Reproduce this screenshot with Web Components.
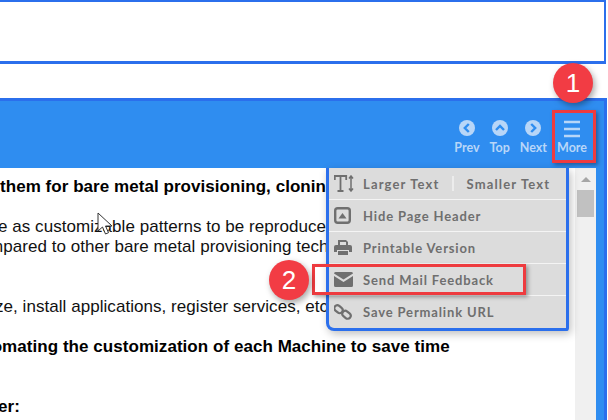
<!DOCTYPE html>
<html>
<head>
<meta charset="utf-8">
<style>
  html, body { margin: 0; padding: 0; background: #fff; overflow: hidden; }
  body { width: 608px; height: 420px; position: relative; font-family: "Liberation Sans", sans-serif; }
</style>
</head>
<body>
<top-box></top-box>
<doc-panel>
  <tool-button slot="tools" label="Prev"><svg viewBox="0 0 16 16" width="16" height="16"><circle cx="8" cy="8" r="8" fill="#b8d6f8"/><path d="M9.800 4 5.800 8l4 4" fill="none" stroke="#2f8df0" stroke-width="2.400"/></svg></tool-button>
  <tool-button slot="tools" label="Top"><svg viewBox="0 0 16 16" width="16" height="16"><circle cx="8" cy="8" r="8" fill="#b8d6f8"/><path d="M4 10 8 6l4 4" fill="none" stroke="#2f8df0" stroke-width="2.400"/></svg></tool-button>
  <tool-button slot="tools" label="Next"><svg viewBox="0 0 16 16" width="16" height="16"><circle cx="8" cy="8" r="8" fill="#b8d6f8"/><path d="M6.200 4l4 4-4 4" fill="none" stroke="#2f8df0" stroke-width="2.400"/></svg></tool-button>
  <tool-button slot="tools" label="More"><svg viewBox="0 0 16 16" width="16" height="16"><path d="M0 2h16M0 9h16M0 16h16" stroke="#b8d6f8" stroke-width="2.600"/></svg></tool-button>

  <doc-line bold style="margin-top:9px">them for bare metal provisioning, clonin</doc-line>
  <doc-line style="margin-top:20px;margin-left:-2px">e as customizable patterns to be reproduce</doc-line>
  <doc-line style="margin-left:-11px">mpared to other bare metal provisioning tech</doc-line>
  <doc-line style="margin-top:40px;margin-left:-5px">ze, install applications, register services, etc</doc-line>
  <doc-line bold style="margin-top:20px;margin-left:-34px">automating the customization of each Machine to save time</doc-line>
  <doc-line bold style="margin-top:40px;margin-left:-2px">er:</doc-line>
</doc-panel>

<doc-menu>
  <menu-row wide>
    <svg slot="icon" viewBox="0 0 21 17" width="21" height="17"><path d="M.8 5V1h11.400v4M6.500 1v15M3.500 16h6" fill="none" stroke="#6f6f6f" stroke-width="1.800"/><path d="M17 1v15M15 3.500 17 1l2 2.500M15 13.500l2 2.500 2-2.500" fill="none" stroke="#6f6f6f" stroke-width="1.500"/></svg>
    Larger Text<i slot="sep"></i><span slot="extra">Smaller Text</span>
  </menu-row>
  <menu-row>
    <svg slot="icon" viewBox="0 0 17 17" width="17" height="17"><rect x="1.200" y="1.200" width="14.600" height="14.600" rx="2.500" fill="none" stroke="#6f6f6f" stroke-width="2.400"/><path d="M4.500 11.500 8.500 6l4 5.500z" fill="#6f6f6f"/></svg>
    Hide Page Header
  </menu-row>
  <menu-row>
    <svg slot="icon" viewBox="0 0 18 17" width="18" height="17"><path d="M4 6V1h8l2 2v3h-2V3H6v3z" fill="#6f6f6f"/><path d="M2 6h14a2 2 0 0 1 2 2v5h-3v-2H3v2H0V8a2 2 0 0 1 2-2z" fill="#6f6f6f"/><path d="M4 12h10v4H4z" fill="#6f6f6f"/></svg>
    Printable Version
  </menu-row>
  <menu-row>
    <svg slot="icon" viewBox="0 0 19 15" width="19" height="15"><path d="M1.500 0h16A1.500 1.500 0 0 1 19 1.500L9.500 7.500 0 1.500A1.500 1.500 0 0 1 1.500 0z" fill="#6f6f6f"/><path d="M0 4l9.500 6L19 4v9.500a1.500 1.500 0 0 1-1.500 1.500h-16A1.500 1.500 0 0 1 0 13.500z" fill="#6f6f6f"/></svg>
    Send Mail Feedback
  </menu-row>
  <menu-row last>
    <svg slot="icon" viewBox="0 0 18 18" width="18" height="18"><g fill="none" stroke="#6f6f6f" stroke-width="2.200"><rect x="0" y="3.200" width="9" height="6" rx="3" transform="rotate(40 4.500 6.200)"/><rect x="8" y="8.800" width="9" height="6" rx="3" transform="rotate(40 12.500 11.800)"/></g></svg>
    Save Permalink URL
  </menu-row>
</doc-menu>

<mark-box style="left:552px;top:110px;width:44px;height:53px"></mark-box>
<mark-box style="left:312px;top:264px;width:214px;height:31px"></mark-box>
<call-out style="left:553px;top:63px">1</call-out>
<call-out style="left:269px;top:260px">2</call-out>
<mouse-cursor></mouse-cursor>

<script>
  class TopBox extends HTMLElement {
    constructor() {
      super();
      this.root = this.attachShadow({mode: 'open'});
    }
    connectedCallback() {
      this.root.innerHTML = `
      <style>
      :host {
        display: block;
        box-sizing: border-box;
        width: 606px;
        height: 64px;
        margin-bottom: 34px;
        background: #fff;
        border-top: 2px solid #2b6fec;
        border-right: 2px solid #2b6fec;
        border-bottom: 3px solid #2b6fec;
      }
      </style>`;
    }
  }
  customElements.define('top-box', TopBox);

  class DocPanel extends HTMLElement {
    constructor() {
      super();
      this.root = this.attachShadow({mode: 'open'});
    }
    connectedCallback() {
      this.root.innerHTML = `
      <style>
      :host {
        display: flex;
        flex-direction: column;
        box-sizing: border-box;
        width: 607px;
        height: 322px;
        background: #2f8df0;
        border-top: 3px solid #2b6fec;
        border-right: 3px solid #2b6fec;
      }
      .toolbar {
        flex: none;
        height: 67px;
        display: flex;
        justify-content: flex-end;
        align-items: flex-start;
        padding: 19px 0 0 0;
        box-sizing: border-box;
      }
      .tools { display: flex; gap: 10px; margin-right: 17px; }
      .body {
        flex: 1;
        display: flex;
        min-height: 0;
        margin-right: 8px;
      }
      .content {
        flex: 1;
        min-width: 0;
        background: #fff;
        overflow: hidden;
      }
      .scroll {
        flex: none;
        width: 21px;
        background: #f0f0f0;
        display: flex;
        flex-direction: column;
        align-items: center;
      }
      .arrow {
        width: 0;
        height: 0;
        margin-top: 9px;
        border-left: 5px solid transparent;
        border-right: 5px solid transparent;
        border-bottom: 5px solid #a6a6a6;
      }
      .thumb {
        width: 17px;
        height: 27px;
        margin-top: 8px;
        background: #c1c1c1;
      }
      </style>
      <div class="toolbar"><div class="tools"><slot name="tools"></slot></div></div>
      <div class="body">
        <div class="content"><slot></slot></div>
        <div class="scroll"><div class="arrow"></div><div class="thumb"></div></div>
      </div>`;
    }
  }
  customElements.define('doc-panel', DocPanel);

  class ToolButton extends HTMLElement {
    constructor() {
      super();
      this.root = this.attachShadow({mode: 'open'});
    }
    connectedCallback() {
      this.root.innerHTML = `
      <style>
      :host {
        display: flex;
        flex-direction: column;
        align-items: center;
        font: bold 12.5px "Lato", sans-serif;
        color: #b8d6f8;
      }
      .label { margin-top: 4px; line-height: 15px; }
      ::slotted(svg) { display: block; overflow: visible; }
      </style>
      <slot></slot>
      <div class="label">${this.getAttribute('label')}</div>`;
    }
  }
  customElements.define('tool-button', ToolButton);

  class DocLine extends HTMLElement {
    constructor() {
      super();
      this.root = this.attachShadow({mode: 'open'});
    }
    connectedCallback() {
      this.root.innerHTML = `
      <style>
      :host {
        display: block;
        white-space: nowrap;
        font: 17px/20px "Liberation Sans", sans-serif;
        letter-spacing: .05px;
        color: #111;
      }
      :host([bold]) { font-weight: bold; color: #000; }
      </style>
      <slot></slot>`;
    }
  }
  customElements.define('doc-line', DocLine);

  class DocMenu extends HTMLElement {
    constructor() {
      super();
      this.root = this.attachShadow({mode: 'open'});
    }
    connectedCallback() {
      this.root.innerHTML = `
      <style>
      :host {
        display: block;
        position: absolute;
        left: 326px;
        top: 168px;
        width: 243px;
        box-sizing: border-box;
        background: #dcdcdc;
        border: 3px solid #2b6fec;
        border-top: 0;
        border-radius: 0 0 3px 8px;
        box-shadow: 2px 3px 8px rgba(0,0,0,.25);
      }
      </style>
      <slot></slot>`;
    }
  }
  customElements.define('doc-menu', DocMenu);

  class MenuRow extends HTMLElement {
    constructor() {
      super();
      this.root = this.attachShadow({mode: 'open'});
    }
    connectedCallback() {
      this.root.innerHTML = `
      <style>
      :host {
        display: flex;
        align-items: center;
        box-sizing: border-box;
        height: 32px;
        border-bottom: 1px solid #f4f4f4;
        font: bold 13px "Lato", sans-serif;
        letter-spacing: .85px;
        color: #6f6f6f;
      }
      :host([wide]) { letter-spacing: 1.15px; }
      :host([last]) { border-bottom: 0; }
      .icon { flex: none; width: 28px; display: flex; justify-content: flex-start; margin-left: 5px; }
      .text { display: flex; align-items: center; margin-left: 1px; }
      ::slotted(i) { width: 2px; height: 15px; background: #ececec; margin: 0 13px 0 12px; }
      ::slotted(svg) { display: block; }
      </style>
      <div class="icon"><slot name="icon"></slot></div>
      <div class="text"><span><slot></slot></span><slot name="sep"></slot><slot name="extra"></slot></div>`;
    }
  }
  customElements.define('menu-row', MenuRow);

  class MarkBox extends HTMLElement {
    constructor() {
      super();
      this.root = this.attachShadow({mode: 'open'});
    }
    connectedCallback() {
      this.root.innerHTML = `
      <style>
      :host {
        display: block;
        position: absolute;
        box-sizing: border-box;
        border: 3px solid #ee3b3f;
        box-shadow: 2px 2px 4px rgba(0,0,0,.35);
      }
      </style>`;
    }
  }
  customElements.define('mark-box', MarkBox);

  class CallOut extends HTMLElement {
    constructor() {
      super();
      this.root = this.attachShadow({mode: 'open'});
    }
    connectedCallback() {
      this.root.innerHTML = `
      <style>
      :host {
        display: flex;
        align-items: center;
        justify-content: center;
        position: absolute;
        width: 40px;
        height: 40px;
        border-radius: 50%;
        background: #f23c44;
        color: #fff;
        font: 26px "Liberation Sans", sans-serif;
        box-shadow: 2px 3px 6px rgba(0,0,0,.35);
      }
      </style>
      <slot></slot>`;
    }
  }
  customElements.define('call-out', CallOut);

  class MouseCursor extends HTMLElement {
    constructor() {
      super();
      this.root = this.attachShadow({mode: 'open'});
    }
    connectedCallback() {
      this.root.innerHTML = `
      <style>
      :host { display: block; position: absolute; left: 97px; top: 212px; width: 16px; height: 25px; }
      svg { display: block; }
      </style>
      <svg viewBox="0 0 16 25" width="16" height="25"><path d="M1 1v18l4.500-4 3 7 3-1.300-3-6.700H15z" fill="#fff" stroke="#333" stroke-width="1"/></svg>`;
    }
  }
  customElements.define('mouse-cursor', MouseCursor);
</script>
</body>
</html>
